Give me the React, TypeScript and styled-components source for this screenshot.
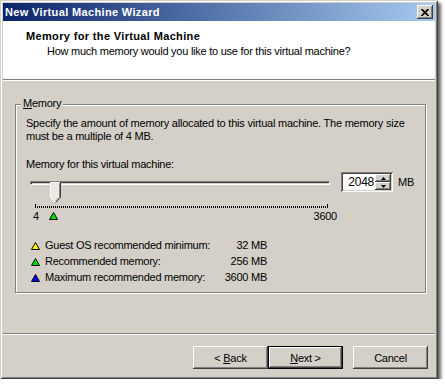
import styled, { createGlobalStyle } from "styled-components";

const FACE = "#d4d0c8";

const GlobalStyle = createGlobalStyle`
  html, body {
    margin: 0;
    padding: 0;
    background: #ffffff;
  }
  body {
    font-family: "Liberation Sans", Arial, sans-serif;
    font-size: 11px;
    letter-spacing: -0.25px;
    color: #000000;
  }
`;

type Marker = { color: string; label: string; value: string };

const markers: Marker[] = [
  { color: "#ffff00", label: "Guest OS recommended minimum:", value: "32 MB" },
  { color: "#00e000", label: "Recommended memory:", value: "256 MB" },
  { color: "#0000ff", label: "Maximum recommended memory:", value: "3600 MB" },
];

function Triangle({ color }: { color: string }) {
  return (
    <svg width="9" height="8" viewBox="0 0 9 8">
      <polygon points="4.5,0.5 8.5,7.5 0.5,7.5" fill={color} stroke="#000" strokeWidth="1" />
    </svg>
  );
}

function Thumb() {
  return (
    <svg width="11" height="21" viewBox="0 0 11 21">
      <polygon points="0.5,0.5 10.5,0.5 10.5,15.5 5.5,20.5 0.5,15.5" fill="#ece9e2" />
      <polyline points="5,20 0.5,15.5 0.5,0.5 10,0.5" fill="none" stroke="#ffffff" />
      <polyline points="9.5,1 9.5,15.1 5.5,19.1" fill="none" stroke="#808080" />
      <polyline points="10.5,0 10.5,15.5 5.5,20.5" fill="none" stroke="#404040" />
    </svg>
  );
}

function SpinArrow({ up }: { up?: boolean }) {
  return (
    <svg width="5" height="3" viewBox="0 0 5 3">
      <polygon points={up ? "2.5,0 5,3 0,3" : "0,0 5,0 2.5,3"} fill="#000" />
    </svg>
  );
}

export default function App() {
  return (
    <>
      <GlobalStyle />
      <Window>
        <TitleBar>
          <TitleText>New Virtual Machine Wizard</TitleText>
          <CloseButton>
            <svg width="8" height="7" viewBox="0 0 8 7">
              <path d="M0.5 0 L7.5 7 M7.5 0 L0.5 7" stroke="#000" strokeWidth="1.7" />
            </svg>
          </CloseButton>
        </TitleBar>
        <Header>
          <HeaderTitle>Memory for the Virtual Machine</HeaderTitle>
          <HeaderSub>How much memory would you like to use for this virtual machine?</HeaderSub>
        </Header>
        <Content>
          <GroupBox>
            <GroupLegend>
              <u>M</u>emory
            </GroupLegend>
            <Text>
              Specify the amount of memory allocated to this virtual machine. The memory size
              <br />
              must be a multiple of 4 MB.
            </Text>
            <FieldLabel>Memory for this virtual machine:</FieldLabel>
            <SliderRow>
              <SliderWrap>
                <TrackArea>
                  <Groove />
                  <ThumbHolder style={{ left: 24 }}>
                    <Thumb />
                  </ThumbHolder>
                </TrackArea>
                <Ticks />
                <ScaleLabels>
                  <span>4</span>
                  <ScaleMarker style={{ left: 23 }}>
                    <Triangle color="#00e000" />
                  </ScaleMarker>
                  <span>3600</span>
                </ScaleLabels>
              </SliderWrap>
              <SpinBox>
                <SpinValue>2048</SpinValue>
                <SpinButtons>
                  <SpinButton>
                    <SpinArrow up />
                  </SpinButton>
                  <SpinButton>
                    <SpinArrow />
                  </SpinButton>
                </SpinButtons>
              </SpinBox>
              <Unit>MB</Unit>
            </SliderRow>
            <LegendList>
              {markers.map(m => (
                <LegendRow key={m.label}>
                  <LegendIcon>
                    <Triangle color={m.color} />
                  </LegendIcon>
                  <span>{m.label}</span>
                  <LegendValue>{m.value}</LegendValue>
                </LegendRow>
              ))}
            </LegendList>
          </GroupBox>
        </Content>
        <Separator />
        <ButtonRow>
          <Button>
            &lt; <u>B</u>ack
          </Button>
          <Button $default>
            <u>N</u>ext &gt;
          </Button>
          <Button $gap>Cancel</Button>
        </ButtonRow>
      </Window>
    </>
  );
}

const Window = styled.div`
  width: 438px;
  height: 379px;
  box-sizing: border-box;
  padding: 3px;
  display: flex;
  flex-direction: column;
  background: ${FACE};
  box-shadow: inset 1px 1px ${FACE}, inset -1px -1px #404040, inset 2px 2px #ffffff,
    inset -2px -2px #808080, 3px 3px 3px rgba(0, 0, 0, 0.6);
`;

const TitleBar = styled.div`
  height: 18px;
  display: flex;
  align-items: center;
  justify-content: space-between;
  padding: 0 2px 0 2px;
  background: linear-gradient(to right, #0a246a, #a6caf0);
`;

const TitleText = styled.span`
  color: #ffffff;
  font-weight: bold;
  font-size: 11px;
  letter-spacing: 0.35px;
`;

const CloseButton = styled.div`
  width: 16px;
  height: 14px;
  box-sizing: border-box;
  display: flex;
  align-items: center;
  justify-content: center;
  background: ${FACE};
  box-shadow: inset -1px -1px #404040, inset 1px 1px #ffffff, inset -2px -2px #808080;
`;

const Header = styled.div`
  height: 59px;
  box-sizing: border-box;
  padding: 9px 0 0 23px;
  background: #ffffff;
  border-bottom: 1px solid #808080;
  box-shadow: 0 1px #ffffff;
`;

const HeaderTitle = styled.div`
  font-weight: bold;
  letter-spacing: 0.35px;
  line-height: 13px;
`;

const HeaderSub = styled.div`
  line-height: 13px;
  margin: 2px 0 0 21px;
`;

const Content = styled.div`
  flex: 1;
  padding: 24px 9px 0 12px;
`;

const GroupBox = styled.div`
  position: relative;
  height: 189px;
  box-sizing: border-box;
  padding: 12px 10px 10px 10px;
  border: 1px solid #808080;
  box-shadow: inset 1px 1px #ffffff, 1px 1px #ffffff;
`;

const GroupLegend = styled.span`
  position: absolute;
  top: -8px;
  left: 5px;
  padding: 0 2px;
  line-height: 13px;
  background: ${FACE};
`;

const Text = styled.p`
  margin: 0;
  line-height: 13px;
  white-space: nowrap;
  letter-spacing: -0.22px;
`;

const FieldLabel = styled.div`
  margin-top: 15px;
  line-height: 13px;
`;

const SliderRow = styled.div`
  display: flex;
  align-items: flex-start;
  margin-top: 1px;
`;

const SliderWrap = styled.div`
  width: 306px;
  margin-top: 1px;
`;

const TrackArea = styled.div`
  position: relative;
  height: 22px;
`;

const Groove = styled.div`
  height: 4px;
  margin: 8px 2px 0 4px;
  box-sizing: border-box;
  border-top: 1px solid #808080;
  border-left: 1px solid #808080;
  border-bottom: 1px solid #ffffff;
  border-right: 1px solid #ffffff;
  box-shadow: inset 1px 1px #404040;
`;

const ThumbHolder = styled.div`
  position: absolute;
  top: 1px;
  height: 21px;
  line-height: 0;
`;

const Ticks = styled.div`
  width: 293px;
  height: 4px;
  margin: 1px 0 0 9px;
  background: linear-gradient(#000, #000) left top / 1px 100% no-repeat,
    linear-gradient(#000, #000) right top / 1px 100% no-repeat,
    repeating-linear-gradient(to right, #000 0 1px, transparent 1px 2px) left bottom / 100% 2px
      no-repeat;
`;

const ScaleLabels = styled.div`
  position: relative;
  display: flex;
  justify-content: space-between;
  margin: 2px -5px 0 0;
  padding-left: 7px;
  line-height: 13px;
`;

const ScaleMarker = styled.div`
  position: absolute;
  top: 2px;
  line-height: 0;
`;

const SpinBox = styled.div`
  width: 52px;
  height: 20px;
  box-sizing: border-box;
  margin-left: 9px;
  display: flex;
  padding: 2px 0 2px 2px;
  background: #ffffff;
  box-shadow: inset 1px 1px #808080, inset -1px -1px #ffffff, inset 2px 2px #404040,
    inset -2px -2px ${FACE};
`;

const SpinValue = styled.div`
  flex: 1;
  text-align: right;
  font-size: 12px;
  line-height: 16px;
  padding-right: 1px;
`;

const SpinButtons = styled.div`
  width: 16px;
  display: flex;
  flex-direction: column;
  margin-right: 2px;
`;

const SpinButton = styled.div`
  height: 8px;
  display: flex;
  align-items: center;
  justify-content: center;
  background: ${FACE};
  box-shadow: inset -1px -1px #404040, inset 1px 1px #ffffff, inset -2px -2px #808080;
`;

const Unit = styled.span`
  margin-left: 5px;
  line-height: 20px;
`;

const LegendList = styled.div`
  margin: 14px 0 0 5px;
`;

const LegendRow = styled.div`
  display: grid;
  grid-template-columns: 14px 173px 49px;
  align-items: center;
  line-height: 16px;
`;

const LegendIcon = styled.span`
  line-height: 0;
  padding-top: 1px;
`;

const LegendValue = styled.span`
  text-align: right;
`;

const Separator = styled.div`
  border-top: 1px solid #808080;
  border-bottom: 1px solid #ffffff;
`;

const ButtonRow = styled.div`
  display: flex;
  justify-content: flex-end;
  padding: 11px 7px 7px 0;
`;

const Button = styled.button<{ $default?: boolean; $gap?: boolean }>`
  width: 75px;
  height: 23px;
  box-sizing: border-box;
  margin: 0 0 0 ${p => (p.$gap ? "10px" : "0")};
  padding: 0;
  font-family: "Liberation Sans", Arial, sans-serif;
  font-size: 11px;
  letter-spacing: -0.25px;
  color: #000;
  background: ${FACE};
  border: ${p => (p.$default ? "1px solid #000" : "none")};
  box-shadow: inset -1px -1px #404040, inset 1px 1px #ffffff, inset -2px -2px #808080,
    inset 2px 2px ${FACE};
`;
